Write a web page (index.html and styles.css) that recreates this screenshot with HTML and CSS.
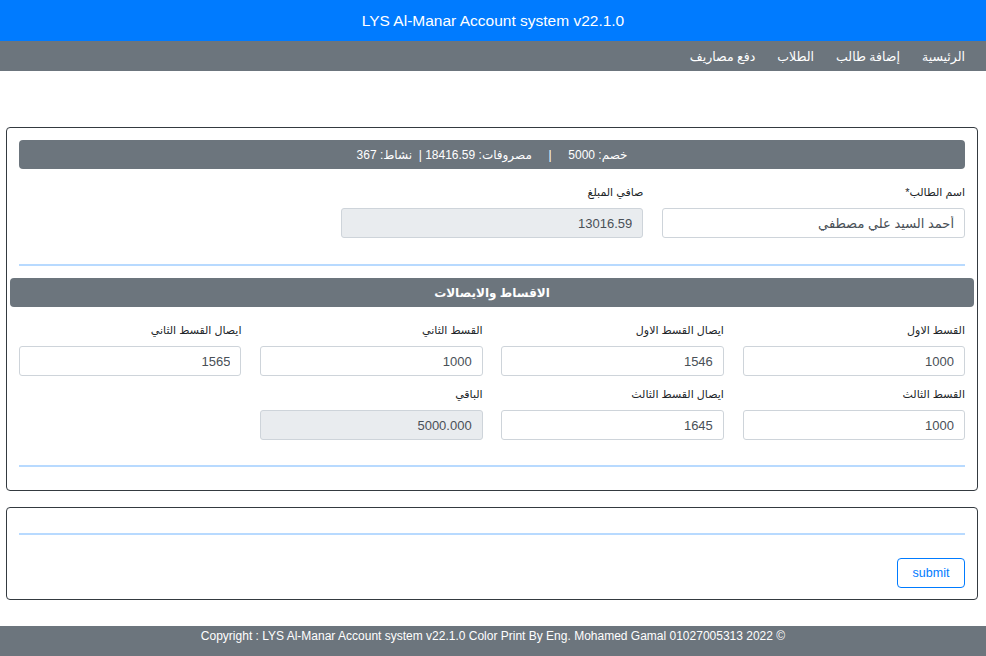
FILE: index.html
```html
<!DOCTYPE html>
<html lang="ar" dir="rtl">
<head>
<meta charset="utf-8">
<title>LYS Al-Manar Account system</title>
<link rel="stylesheet" href="styles.css">
</head>
<body>
<header class="topbar"><span dir="ltr">LYS Al-Manar Account system v22.1.0</span></header>
<nav class="mainnav">
  <a href="#">الرئيسية</a>
  <a href="#">إضافة طالب</a>
  <a href="#">الطلاب</a>
  <a href="#">دفع مصاريف</a>
</nav>
<main class="page">
  <section class="card">
    <div class="summary">خصم: 5000 &nbsp;&nbsp;&nbsp; | &nbsp;&nbsp;&nbsp; مصروفات: 18416.59 | &nbsp;نشاط: 367</div>
    <div class="grid3">
      <div class="field">
        <label>اسم الطالب*</label>
        <input class="input" type="text" value="أحمد السيد علي مصطفي">
      </div>
      <div class="field">
        <label>صافي المبلغ</label>
        <input class="input readonly" type="text" value="13016.59" readonly>
      </div>
    </div>
    <hr class="sep sep-a">
    <div class="section-title">الاقساط والايصالات</div>
    <div class="grid4">
      <div class="field"><label>القسط الاول</label><input class="input" value="1000"></div>
      <div class="field"><label>ايصال القسط الاول</label><input class="input" value="1546"></div>
      <div class="field"><label>القسط الثاني</label><input class="input" value="1000"></div>
      <div class="field"><label>ايصال القسط الثاني</label><input class="input" value="1565"></div>
      <div class="field"><label>القسط الثالث</label><input class="input" value="1000"></div>
      <div class="field"><label>ايصال القسط الثالث</label><input class="input" value="1645"></div>
      <div class="field"><label>الباقي</label><input class="input readonly" value="5000.000" readonly></div>
    </div>
    <hr class="sep sep-b">
  </section>
  <section class="card card-submit">
    <hr class="sep sep-c">
    <div class="actions"><button class="btn-outline" type="button">submit</button></div>
  </section>
</main>
<footer class="footer"><span dir="ltr">Copyright : LYS Al-Manar Account system v22.1.0 Color Print By Eng. Mohamed Gamal 01027005313 2022 ©</span></footer>
</body>
</html>
```
FILE: styles.css
```css
* { box-sizing: border-box; }
html, body { margin: 0; padding: 0; }
body {
  font-family: "Liberation Sans", "DejaVu Sans", sans-serif;
  color: #212529;
  background: #fff;
  font-size: 13px;
}
.topbar {
  height: 41px;
  background: #007bff;
  color: #fff;
  display: flex;
  align-items: center;
  justify-content: center;
  font-size: 15.5px;
}
.mainnav {
  height: 30px;
  background: #6c757d;
  display: flex;
  align-items: center;
  padding-right: 21px;
  gap: 22px;
}
.mainnav a {
  color: #fff;
  text-decoration: none;
  font-size: 12.5px;
}
.page {
  padding-top: 56px;
}
.card {
  margin: 0 8px 0 6px;
  border: 1px solid #343a40;
  border-radius: 4px;
  padding: 12px 12px 23px;
}
.summary {
  height: 29px;
  background: #6c757d;
  color: #fff;
  border-radius: 4px;
  display: flex;
  align-items: center;
  justify-content: center;
  font-size: 12px;
  margin-bottom: 15px;
}
.grid3 {
  display: grid;
  grid-template-columns: repeat(3, 1fr);
  column-gap: 19px;
}
.grid4 {
  display: grid;
  grid-template-columns: repeat(4, 1fr);
  column-gap: 18.7px;
  row-gap: 10px;
}
.field label {
  display: block;
  height: 16px;
  line-height: 16px;
  font-size: 11px;
  margin-bottom: 8px;
}
.input {
  display: block;
  width: 100%;
  height: 30px;
  border: 1px solid #ced4da;
  border-radius: 3px;
  padding: 0 10px;
  font-family: inherit;
  font-size: 13px;
  color: #495057;
  background: #fff;
  text-align: right;
  direction: rtl;
}
.input.readonly { background: #e9ecef; }
.sep {
  border: 0;
  height: 2px;
  background: #b8daff;
  margin: 0;
}
.sep-a { margin-top: 26px; margin-bottom: 12px; }
.sep-b { margin-top: 25px; }
.section-title {
  margin: 0 -9px 15px;
  height: 29px;
  background: #6c757d;
  color: #fff;
  border-radius: 4px;
  display: flex;
  align-items: center;
  justify-content: center;
  font-size: 12px;
  font-weight: bold;
}
.card-submit {
  margin-top: 16px;
  padding: 25px 12px 11px;
}
.actions {
  margin-top: 23px;
  display: flex;
  justify-content: flex-start;
}
.btn-outline {
  width: 68px;
  height: 30px;
  border: 1px solid #007bff;
  border-radius: 4px;
  background: #fff;
  color: #007bff;
  font-family: inherit;
  font-size: 12.5px;
}
.footer {
  margin-top: 26px;
  height: 30px;
  background: #6c757d;
  color: #fff;
  display: flex;
  justify-content: center;
  padding-top: 3px;
  font-size: 12px;
}
```
